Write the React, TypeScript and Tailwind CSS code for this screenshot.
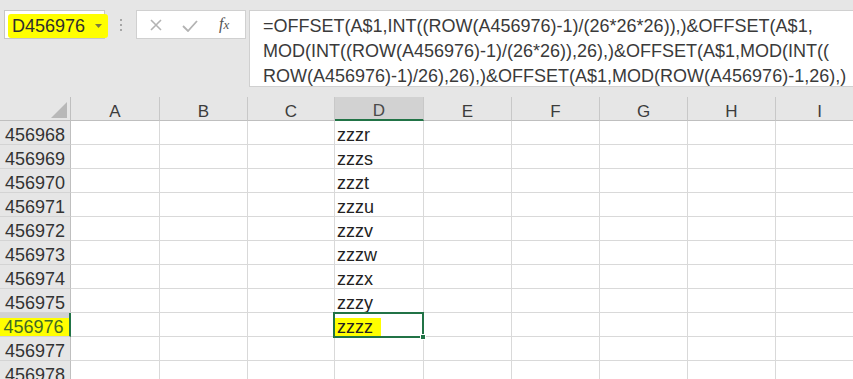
import React from 'react';

const COLS = [
    { name: 'A', w: 'w-[89px]' },
    { name: 'B', w: 'w-[88px]' },
    { name: 'C', w: 'w-[87px]' },
    { name: 'D', w: 'w-[89px]' },
    { name: 'E', w: 'w-[88px]' },
    { name: 'F', w: 'w-[88px]' },
    { name: 'G', w: 'w-[88px]' },
    { name: 'H', w: 'w-[88px]' },
    { name: 'I', w: 'w-[88px]' },
];

const ROWS: { n: number; d?: string }[] = [
    { n: 456968, d: 'zzzr' },
    { n: 456969, d: 'zzzs' },
    { n: 456970, d: 'zzzt' },
    { n: 456971, d: 'zzzu' },
    { n: 456972, d: 'zzzv' },
    { n: 456973, d: 'zzzw' },
    { n: 456974, d: 'zzzx' },
    { n: 456975, d: 'zzzy' },
    { n: 456976, d: 'zzzz' },
    { n: 456977 },
    { n: 456978 },
];

const SELECTED = 456976;

const FormulaBar: React.FC = () => {
    return (
        <div className="h-[97px] bg-[#e6e6e6] flex items-start pt-[10px] pl-[4px]">
            {/* Name box */}
            <div className="w-[101px] h-[29px] bg-white border border-[#c6c6c6] flex items-center pl-[3px] pt-[2px]">
                <span className="inline-flex items-center h-[24px] px-[4px] bg-[#ffff00] rounded-[3px] text-[18px] leading-[18px] text-[#2e2e2e]">
                    D456976
                    <svg width="7" height="4" viewBox="0 0 7 4" className="ml-[10px] mr-[2px]">
                        <path d="M0 0 L7 0 L3.5 4 Z" fill="#7a7a40" />
                    </svg>
                </span>
            </div>

            {/* Splitter dots */}
            <div className="w-[31px] h-[29px] flex flex-col items-center justify-center gap-[3px]">
                <span className="w-[2px] h-[2px] bg-[#a6a6a6]"></span>
                <span className="w-[2px] h-[2px] bg-[#a6a6a6]"></span>
                <span className="w-[2px] h-[2px] bg-[#a6a6a6]"></span>
            </div>

            {/* Cancel / enter / fx */}
            <div className="w-[110px] h-[29px] bg-white border border-[#d0d0d0] flex items-center">
                <svg width="14" height="14" viewBox="0 0 14 14" className="ml-[12px]">
                    <path d="M2 2 L12 12 M12 2 L2 12" stroke="#b3b3b3" strokeWidth="1.6" />
                </svg>
                <svg width="16" height="12" viewBox="0 0 16 12" className="ml-[19px] mt-[2px]">
                    <path d="M1 6 L6 11 L15 1" stroke="#b3b3b3" strokeWidth="1.8" fill="none" />
                </svg>
                <span className="ml-[21px] text-[16px] italic font-['Liberation_Serif',serif] text-[#555555] leading-none -mt-[2px]">
                    f<span className="text-[13px]">x</span>
                </span>
            </div>

            {/* Formula */}
            <div className="ml-[3px] flex-1 h-[77px] bg-white border border-r-0 border-[#d0d0d0] pl-[13px] pt-[3px] text-[18px] leading-[25px] text-[#3a3a3a] whitespace-nowrap overflow-hidden">
                <div>=OFFSET(A$1,INT((ROW(A456976)-1)/(26*26*26)),)&amp;OFFSET(A$1,</div>
                <div>MOD(INT((ROW(A456976)-1)/(26*26)),26),)&amp;OFFSET(A$1,MOD(INT((</div>
                <div>ROW(A456976)-1)/26),26),)&amp;OFFSET(A$1,MOD(ROW(A456976)-1,26),)</div>
            </div>
        </div>
    );
};

const Sheet: React.FC = () => {
    return (
        <div className="flex flex-col">
            {/* Column headers */}
            <div className="flex h-[24px] bg-[#e6e6e6]">
                <div className="w-[71px] shrink-0 h-full border-r border-b border-[#bfbfbf] flex items-end justify-end pr-[3px] pb-[2px]">
                    <svg width="16" height="16" viewBox="0 0 16 16">
                        <path d="M16 0 L16 16 L0 16 Z" fill="#b8b8b8" />
                    </svg>
                </div>
                {COLS.map((c) => (
                    <div
                        key={c.name}
                        className={`${c.w} shrink-0 h-full border-r border-[#c8c8c8] flex items-end justify-center text-[17px] leading-[17px] ${
                            c.name === 'D'
                                ? 'bg-[#d2d2d2] border-b-2 border-b-[#217346] text-[#4a4a4a]'
                                : 'border-b border-b-[#bfbfbf] text-[#3c3c3c]'
                        }`}
                    >
                        {c.name}
                    </div>
                ))}
            </div>

            {/* Rows */}
            {ROWS.map((r) => {
                const sel = r.n === SELECTED;
                return (
                    <div key={r.n} className="flex h-[24px] shrink-0">
                        <div
                            className={`w-[71px] shrink-0 h-full border-b border-[#d4d4d4] flex items-end justify-center text-[18px] leading-[18px] ${
                                sel
                                    ? 'bg-[#d2d2d2] border-r-2 border-r-[#217346] text-[#3f6a26]'
                                    : 'bg-[#e6e6e6] border-r border-r-[#bfbfbf] text-[#333333]'
                            }`}
                        >
                            {sel ? (
                                <span className="bg-[#ffff00] px-[5px] -ml-[2px]">{r.n}</span>
                            ) : (
                                r.n
                            )}
                        </div>
                        {COLS.map((c) => (
                            <div
                                key={c.name}
                                className={`${c.w} shrink-0 h-full border-r border-b border-[#d9d9d9] bg-white flex items-end pl-[2px] text-[18px] leading-[18px] text-[#222222] ${
                                    sel && c.name === 'D' ? 'relative' : ''
                                }`}
                            >
                                {c.name === 'D' && r.d && (sel ? (
                                    <span className="bg-[#ffff00] -ml-[3px] pl-[3px] pr-[8px]">{r.d}</span>
                                ) : (
                                    r.d
                                ))}
                                {sel && c.name === 'D' && (
                                    <div className="absolute -left-[2px] -top-[1px] w-[91px] h-[26px] border-2 border-[#217346]">
                                        <div className="absolute -right-[4px] -bottom-[4px] w-[6px] h-[6px] bg-[#217346] border border-white"></div>
                                    </div>
                                )}
                            </div>
                        ))}
                    </div>
                );
            })}
        </div>
    );
};

export default function App() {
    return (
        <div className="w-[853px] h-[379px] overflow-hidden bg-white font-['Liberation_Sans',Arial,sans-serif]">
            <FormulaBar />
            <Sheet />
        </div>
    );
}
